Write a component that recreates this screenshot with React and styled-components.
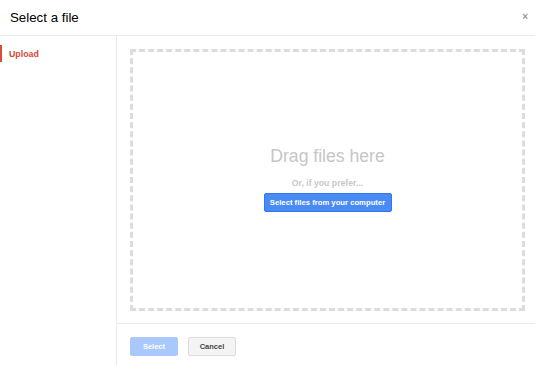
import React from "react";
import styled, { createGlobalStyle } from "styled-components";

const Global = createGlobalStyle`
  html, body { margin: 0; padding: 0; background: #fff; }
  body { font-family: "Liberation Sans", Arial, sans-serif; }
  #root { width: 535px; height: 365px; }
`;

const Dialog = styled.div`
  width: 535px;
  height: 365px;
  display: flex;
  flex-direction: column;
  background: #fff;
  overflow: hidden;
`;

const Header = styled.div`
  height: 35px;
  border-bottom: 1px solid #ebebeb;
  display: flex;
  align-items: center;
  justify-content: space-between;
  padding: 0 7px 0 10px;
  flex-shrink: 0;
`;

const Title = styled.div`
  font-size: 13.3px;
  color: #000;
  margin-top: -1px;
`;

const Close = styled.div`
  font-size: 10px;
  color: #999;
  font-weight: bold;
  margin-top: -3px;
`;

const Body = styled.div`
  flex: 1;
  display: flex;
  min-height: 0;
`;

const Sidebar = styled.div`
  width: 116px;
  border-right: 1px solid #ebebeb;
  padding-top: 9px;
  flex-shrink: 0;
`;

const NavItem = styled.div`
  height: 17px;
  display: flex;
  align-items: center;
  padding-left: 7px;
  font-size: 8.8px;
  font-weight: bold;
  color: ${(p) => (p.$active ? "#d14836" : "#444")};
  border-left: 2px solid ${(p) => (p.$active ? "#dd4b39" : "transparent")};
`;

const Main = styled.div`
  flex: 1;
  display: flex;
  flex-direction: column;
`;

const DropArea = styled.div`
  flex: 1;
  padding: 13px 10px 12px 13px;
  display: flex;
`;

const DropZone = styled.div`
  flex: 1;
  border: 3px dashed #dcdcdc;
  display: flex;
  flex-direction: column;
  align-items: center;
  justify-content: center;
`;

const DragText = styled.div`
  font-size: 17.6px;
  color: #c6c6c6;
  margin-bottom: 11px;
  margin-top: -2px;
`;

const PreferText = styled.div`
  font-size: 8.7px;
  font-weight: bold;
  color: #c8c8c8;
  margin-bottom: 5px;
`;

const BlueButton = styled.button`
  height: 19px;
  width: 128px;
  padding: 0;
  border: 1px solid #3079ed;
  background: #4a8af4;
  color: #fff;
  font-family: inherit;
  font-size: 7.7px;
  font-weight: bold;
  border-radius: 2px;
`;

const Footer = styled.div`
  height: 42px;
  border-top: 1px solid #ebebeb;
  display: flex;
  align-items: flex-start;
  padding: 13px 0 0 13px;
  gap: 10px;
  box-sizing: border-box;
`;

const FootButton = styled.button`
  width: 48px;
  height: 19px;
  border-radius: 2px;
  font-family: inherit;
  font-size: 7.5px;
  font-weight: bold;
  padding: 0;
  border: 1px solid ${(p) => (p.$primary ? "#a9c9fc" : "#dcdcdc")};
  background: ${(p) => (p.$primary ? "#a9c9fc" : "#f4f4f4")};
  color: ${(p) => (p.$primary ? "#fff" : "#444")};
`;

export default function App() {
  return (
    <>
      <Global />
      <Dialog>
        <Header>
          <Title>Select a file</Title>
          <Close>×</Close>
        </Header>
        <Body>
          <Sidebar>
            <NavItem $active>Upload</NavItem>
          </Sidebar>
          <Main>
            <DropArea>
              <DropZone>
                <DragText>Drag files here</DragText>
                <PreferText>Or, if you prefer...</PreferText>
                <BlueButton>Select files from your computer</BlueButton>
              </DropZone>
            </DropArea>
            <Footer>
              <FootButton $primary>Select</FootButton>
              <FootButton>Cancel</FootButton>
            </Footer>
          </Main>
        </Body>
      </Dialog>
    </>
  );
}
